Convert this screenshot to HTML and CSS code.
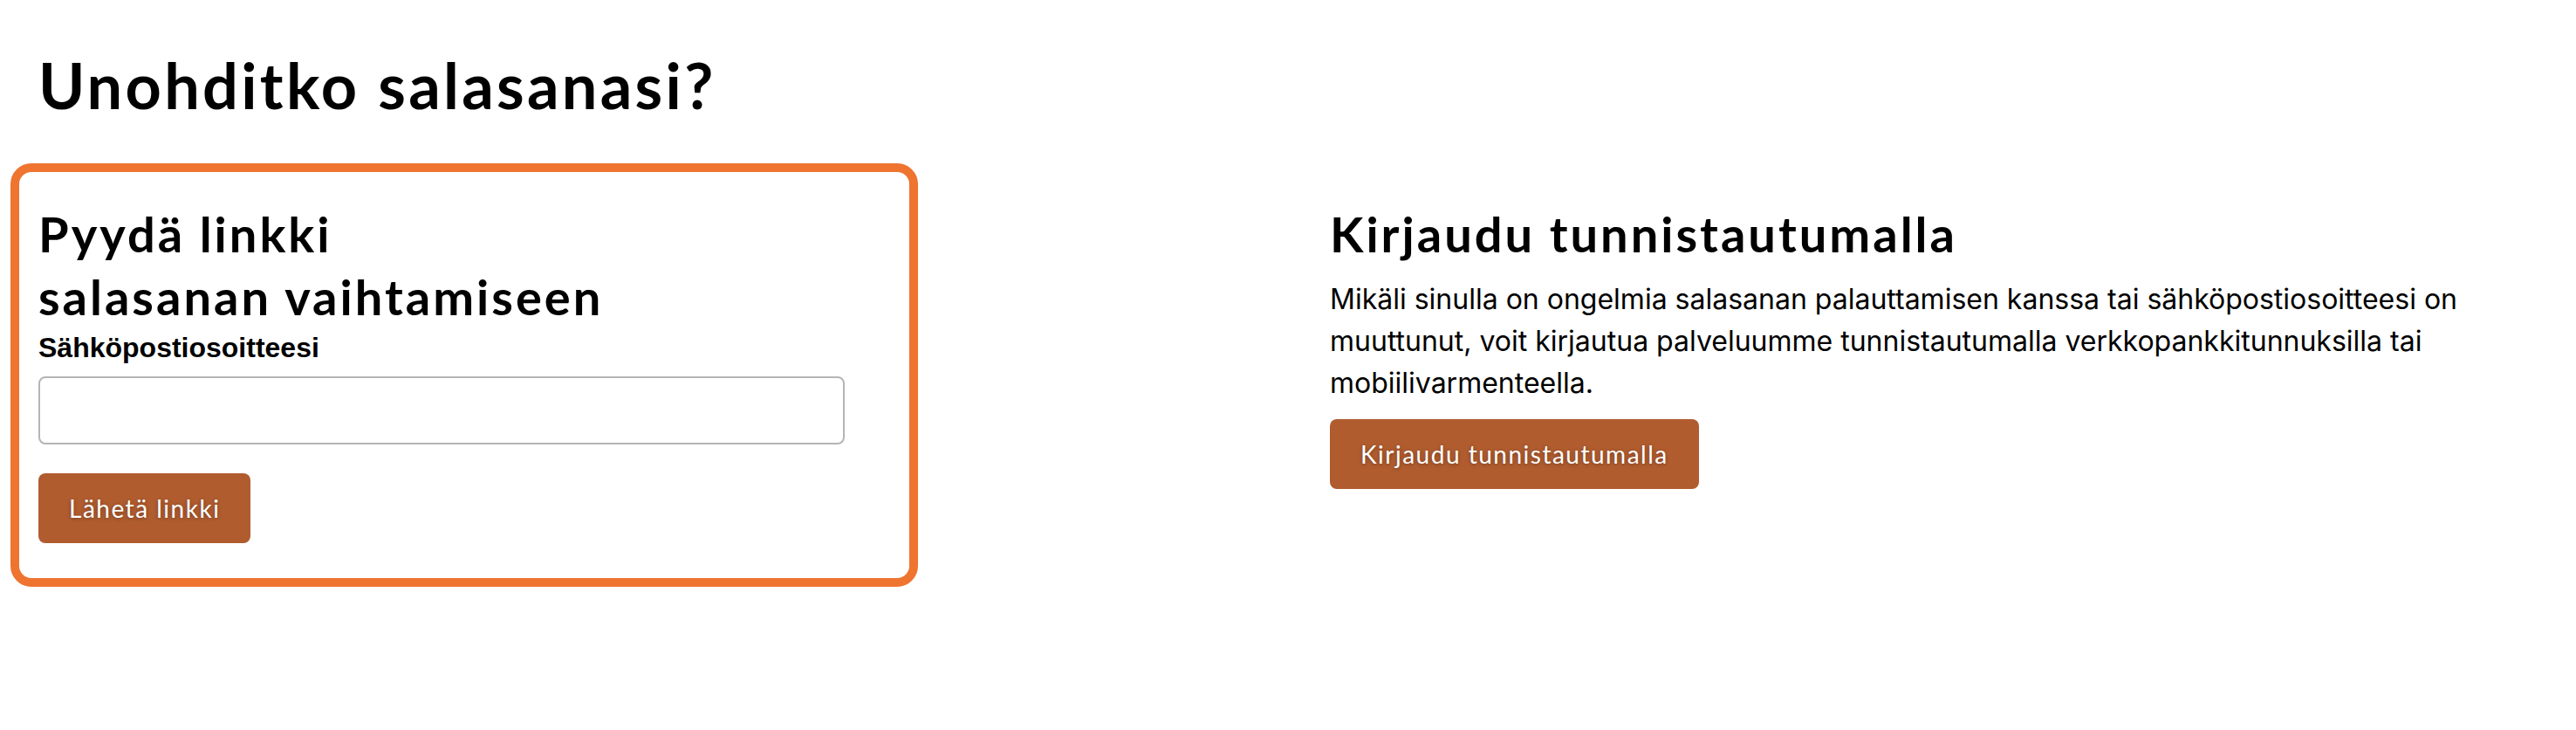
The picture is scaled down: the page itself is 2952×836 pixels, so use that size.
FILE: index.html
```html
<!DOCTYPE html>
<html lang="fi">
<head>
<meta charset="utf-8">
<title>Unohditko salasanasi?</title>
<link rel="stylesheet" href="styles.css">
</head>
<body>
<main class="page">
  <h1 class="page-title">Unohditko salasanasi?</h1>
  <div class="columns">
    <section class="card">
      <h2 class="section-title">Pyydä linkki<br>salasanan vaihtamiseen</h2>
      <form class="reset-form">
        <label class="field-label" for="email">Sähköpostiosoitteesi</label>
        <input class="field-input" id="email" type="email">
        <button class="btn" type="button">Lähetä linkki</button>
      </form>
    </section>
    <section class="login">
      <h2 class="section-title">Kirjaudu tunnistautumalla</h2>
      <p class="login-text">Mikäli sinulla on ongelmia salasanan palauttamisen kanssa tai sähköpostiosoitteesi on muuttunut, voit kirjautua palveluumme tunnistautumalla verkkopankkitunnuksilla tai mobiilivarmenteella.</p>
      <button class="btn" type="button">Kirjaudu tunnistautumalla</button>
    </section>
  </div>
</main>
</body>
</html>
```
FILE: styles.css
```css
* { box-sizing: border-box; }

body {
  margin: 0;
  background: #ffffff;
  color: #000000;
  font-family: "Inter", "Liberation Sans", sans-serif;
}

.page {
  padding: 0 12px;
}

.page-title {
  margin: 0;
  padding: 54px 0 0 32px;
  font-family: "Lato", "Liberation Sans", sans-serif;
  font-weight: 700;
  font-size: 72px;
  line-height: 86px;
  letter-spacing: 3.3px;
}

.columns {
  display: grid;
  grid-template-columns: 1fr 1fr;
  column-gap: 48px;
  margin-top: 47px;
}

.card {
  width: 1040px;
  border: 10px solid #ee7430;
  border-radius: 24px;
  padding: 35px 22px 40px 22px;
}

.section-title {
  margin: 0;
  font-family: "Lato", "Liberation Sans", sans-serif;
  font-weight: 700;
  font-size: 56px;
  line-height: 72px;
  letter-spacing: 3px;
}

.reset-form {
  display: flex;
  flex-direction: column;
  align-items: flex-start;
}

.field-label {
  margin-top: 2px;
  font-family: "Liberation Sans", Arial, sans-serif;
  font-weight: 700;
  font-size: 32px;
  line-height: 40px;
}

.field-input {
  width: 924px;
  height: 78px;
  margin-top: 13px;
  border: 2px solid #b5b5b5;
  border-radius: 8px;
  background: #fff;
}

.btn {
  height: 80px;
  padding: 0 35px;
  border: 0;
  border-radius: 8px;
  background: #b05c2f;
  color: #ffffff;
  font-family: "Lato", "Liberation Sans", sans-serif;
  font-size: 28px;
  letter-spacing: 1.5px;
  text-shadow: 0 1px 4px rgba(0, 0, 0, 0.35);
}

.reset-form .btn {
  margin-top: 33px;
}

.login {
  padding: 45px 24px 0 24px;
}

.login-text {
  max-width: 1390px;
  margin: 15px 0 17px;
  font-size: 32px;
  line-height: 48px;
}
```
